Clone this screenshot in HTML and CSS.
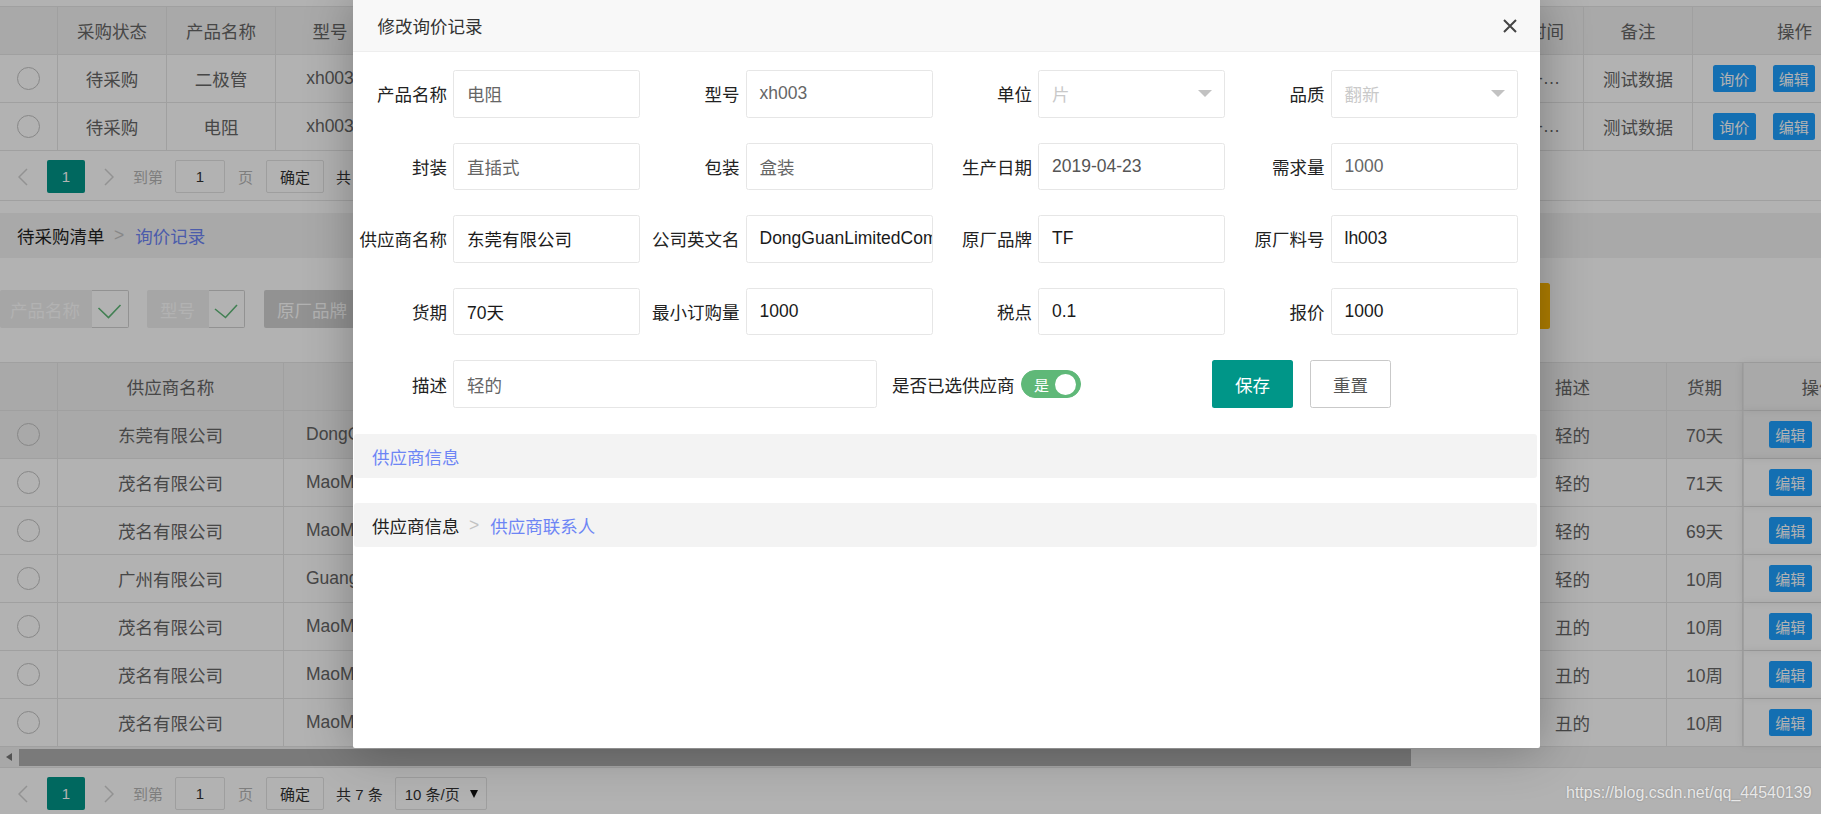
FILE: index.html
```html
<!DOCTYPE html>
<html lang="zh-CN">
<head>
<meta charset="utf-8">
<title>修改询价记录</title>
<link rel="stylesheet" href="styles.css">
</head>
<body>
<div class="page">
  <div class="tview top-t">
    <div class="tr th">
      <div class="td"></div>
      <div class="td">采购状态</div>
      <div class="td">产品名称</div>
      <div class="td">型号</div>
      <div class="td"></div>
      <div class="td"></div>
      <div class="td"></div>
      <div class="td"></div>
      <div class="td"></div>
      <div class="td"></div>
      <div class="td"></div>
      <div class="td"></div>
      <div class="td"></div>
      <div class="td"></div>
      <div class="td">创建时间</div>
      <div class="td">备注</div>
      <div class="td">操作</div>
    </div>
    <div class="tr">
      <div class="td"><span class="radio"></span></div>
      <div class="td">待采购</div>
      <div class="td">二极管</div>
      <div class="td">xh003</div>
      <div class="td"></div>
      <div class="td"></div>
      <div class="td"></div>
      <div class="td"></div>
      <div class="td"></div>
      <div class="td"></div>
      <div class="td"></div>
      <div class="td"></div>
      <div class="td"></div>
      <div class="td"></div>
      <div class="td ell">2019-04-23 10:12:45</div>
      <div class="td">测试数据</div>
      <div class="td ops"><span class="btn-xs">询价</span><span class="btn-xs">编辑</span></div>
    </div>
    <div class="tr">
      <div class="td"><span class="radio"></span></div>
      <div class="td">待采购</div>
      <div class="td">电阻</div>
      <div class="td">xh003</div>
      <div class="td"></div>
      <div class="td"></div>
      <div class="td"></div>
      <div class="td"></div>
      <div class="td"></div>
      <div class="td"></div>
      <div class="td"></div>
      <div class="td"></div>
      <div class="td"></div>
      <div class="td"></div>
      <div class="td ell">2019-04-23 10:15:02</div>
      <div class="td">测试数据</div>
      <div class="td ops"><span class="btn-xs">询价</span><span class="btn-xs">编辑</span></div>
    </div>
    <div class="pager">
      <span class="pg-arr"><svg width="10" height="18" viewBox="0 0 10 18"><polyline points="9,1 1,9 9,17" fill="none" stroke="#d2d2d2" stroke-width="1.5"/></svg></span>
      <span class="pg-cur">1</span>
      <span class="pg-arr pg-next"><svg width="10" height="18" viewBox="0 0 10 18"><polyline points="1,1 9,9 1,17" fill="none" stroke="#d2d2d2" stroke-width="1.5"/></svg></span>
      <span class="pg-txt pg-goto">到第</span>
      <span class="pg-inp">1</span>
      <span class="pg-txt pg-page">页</span>
      <span class="pg-btn">确定</span>
      <span class="pg-count">共 2 条</span>
    </div>
  </div>

  <div class="crumb-band">
    <span class="crumb-a">待采购清单</span><span class="sep">&gt;</span><span class="crumb-cur">询价记录</span>
  </div>

  <div class="filters">
    <div class="chk"><span>产品名称</span><i><svg width="36" height="36" viewBox="0 0 36 36"><polyline points="6.5,17 16.5,26.5 28.5,14" fill="none" stroke="#5fb878" stroke-width="1.6"/></svg></i></div>
    <div class="chk chk2"><span>型号</span><i><svg width="35" height="36" viewBox="0 0 35 36"><polyline points="6,18 16.5,26.5 28,14" fill="none" stroke="#5fb878" stroke-width="1.6"/></svg></i></div>
    <div class="chk chk3 off"><span>原厂品牌</span><i></i></div>
    <div class="btn-warm"></div>
  </div>

  <div class="tview low-t">
    <div class="tr th">
      <div class="td"></div>
      <div class="td">供应商名称</div>
      <div class="td">公司英文名</div>
      <div class="td"></div>
      <div class="td"></div>
      <div class="td"></div>
      <div class="td"></div>
      <div class="td"></div>
      <div class="td"></div>
      <div class="td"></div>
      <div class="td"></div>
      <div class="td l desc">描述</div>
      <div class="td">货期</div>
      <div class="td fixed">操作</div>
    </div>
    <div class="tr hover">
      <div class="td"><span class="radio"></span></div>
      <div class="td">东莞有限公司</div>
      <div class="td l en">DongGuanLimitedCompany</div>
      <div class="td"></div><div class="td"></div><div class="td"></div><div class="td"></div>
      <div class="td"></div><div class="td"></div><div class="td"></div><div class="td"></div>
      <div class="td l desc">轻的</div>
      <div class="td">70天</div>
      <div class="td fixed fops"><span class="btn-xs">编辑</span></div>
    </div>
    <div class="tr">
      <div class="td"><span class="radio"></span></div>
      <div class="td">茂名有限公司</div>
      <div class="td l en">MaoMingLimitedCompany</div>
      <div class="td"></div><div class="td"></div><div class="td"></div><div class="td"></div>
      <div class="td"></div><div class="td"></div><div class="td"></div><div class="td"></div>
      <div class="td l desc">轻的</div>
      <div class="td">71天</div>
      <div class="td fixed fops"><span class="btn-xs">编辑</span></div>
    </div>
    <div class="tr">
      <div class="td"><span class="radio"></span></div>
      <div class="td">茂名有限公司</div>
      <div class="td l en">MaoMingLimitedCompany</div>
      <div class="td"></div><div class="td"></div><div class="td"></div><div class="td"></div>
      <div class="td"></div><div class="td"></div><div class="td"></div><div class="td"></div>
      <div class="td l desc">轻的</div>
      <div class="td">69天</div>
      <div class="td fixed fops"><span class="btn-xs">编辑</span></div>
    </div>
    <div class="tr">
      <div class="td"><span class="radio"></span></div>
      <div class="td">广州有限公司</div>
      <div class="td l en">GuangZhouLimitedCompany</div>
      <div class="td"></div><div class="td"></div><div class="td"></div><div class="td"></div>
      <div class="td"></div><div class="td"></div><div class="td"></div><div class="td"></div>
      <div class="td l desc">轻的</div>
      <div class="td">10周</div>
      <div class="td fixed fops"><span class="btn-xs">编辑</span></div>
    </div>
    <div class="tr">
      <div class="td"><span class="radio"></span></div>
      <div class="td">茂名有限公司</div>
      <div class="td l en">MaoMingLimitedCompany</div>
      <div class="td"></div><div class="td"></div><div class="td"></div><div class="td"></div>
      <div class="td"></div><div class="td"></div><div class="td"></div><div class="td"></div>
      <div class="td l desc">丑的</div>
      <div class="td">10周</div>
      <div class="td fixed fops"><span class="btn-xs">编辑</span></div>
    </div>
    <div class="tr">
      <div class="td"><span class="radio"></span></div>
      <div class="td">茂名有限公司</div>
      <div class="td l en">MaoMingLimitedCompany</div>
      <div class="td"></div><div class="td"></div><div class="td"></div><div class="td"></div>
      <div class="td"></div><div class="td"></div><div class="td"></div><div class="td"></div>
      <div class="td l desc">丑的</div>
      <div class="td">10周</div>
      <div class="td fixed fops"><span class="btn-xs">编辑</span></div>
    </div>
    <div class="tr">
      <div class="td"><span class="radio"></span></div>
      <div class="td">茂名有限公司</div>
      <div class="td l en">MaoMingLimitedCompany</div>
      <div class="td"></div><div class="td"></div><div class="td"></div><div class="td"></div>
      <div class="td"></div><div class="td"></div><div class="td"></div><div class="td"></div>
      <div class="td l desc">丑的</div>
      <div class="td">10周</div>
      <div class="td fixed fops"><span class="btn-xs">编辑</span></div>
    </div>
    <div class="hscroll"><span class="sb-btn"></span><span class="sb-thumb"></span></div>
    <div class="pager bottom">
      <span class="pg-arr"><svg width="10" height="18" viewBox="0 0 10 18"><polyline points="9,1 1,9 9,17" fill="none" stroke="#d2d2d2" stroke-width="1.5"/></svg></span>
      <span class="pg-cur">1</span>
      <span class="pg-arr pg-next"><svg width="10" height="18" viewBox="0 0 10 18"><polyline points="1,1 9,9 1,17" fill="none" stroke="#d2d2d2" stroke-width="1.5"/></svg></span>
      <span class="pg-txt pg-goto">到第</span>
      <span class="pg-inp">1</span>
      <span class="pg-txt pg-page">页</span>
      <span class="pg-btn">确定</span>
      <span class="pg-count">共 7 条</span>
      <span class="pg-limit">10 条/页<i class="pg-tri"></i></span>
    </div>
  </div>
</div>

<div class="shade"></div>

<div class="layer">
  <div class="layer-title">
    <span>修改询价记录</span>
    <span class="layer-close"><svg width="16" height="16" viewBox="0 0 16 16"><path d="M2 2 L14 14 M14 2 L2 14" stroke="#444" stroke-width="2" fill="none"/></svg></span>
  </div>
  <div class="layer-body">
    <div class="form-grid">
      <div class="fi"><label>产品名称</label><div class="inp ro">电阻</div></div>
      <div class="fi"><label>型号</label><div class="inp ro">xh003</div></div>
      <div class="fi"><label>单位</label><div class="inp sel"><span>片</span><i class="tri"></i></div></div>
      <div class="fi"><label>品质</label><div class="inp sel"><span>翻新</span><i class="tri"></i></div></div>

      <div class="fi"><label>封装</label><div class="inp ro">直插式</div></div>
      <div class="fi"><label>包装</label><div class="inp ro">盒装</div></div>
      <div class="fi"><label>生产日期</label><div class="inp mid">2019-04-23</div></div>
      <div class="fi"><label>需求量</label><div class="inp ro">1000</div></div>

      <div class="fi"><label>供应商名称</label><div class="inp">东莞有限公司</div></div>
      <div class="fi"><label>公司英文名</label><div class="inp">DongGuanLimitedCompany</div></div>
      <div class="fi"><label>原厂品牌</label><div class="inp">TF</div></div>
      <div class="fi"><label>原厂料号</label><div class="inp">lh003</div></div>

      <div class="fi"><label>货期</label><div class="inp">70天</div></div>
      <div class="fi"><label>最小订购量</label><div class="inp">1000</div></div>
      <div class="fi"><label>税点</label><div class="inp">0.1</div></div>
      <div class="fi"><label>报价</label><div class="inp">1000</div></div>
    </div>

    <div class="row5">
      <label class="lbl">描述</label>
      <div class="inp ro desc-inp">轻的</div>
      <label class="lbl2">是否已选供应商</label>
      <div class="switch"><em>是</em><i></i></div>
      <span class="btn save">保存</span>
      <span class="btn reset">重置</span>
    </div>

    <div class="band"><span class="crumb-cur">供应商信息</span></div>
    <div class="band band2"><span class="crumb-a">供应商信息</span><span class="sep">&gt;</span><span class="crumb-cur">供应商联系人</span></div>
  </div>
</div>

<div class="wm">https://blog.csdn.net/qq_44540139</div>
</body>
</html>
```

FILE: styles.css
```css
* { box-sizing: border-box; margin: 0; padding: 0; }
html, body { width: 1821px; height: 814px; overflow: hidden; }
body {
  position: relative;
  background: #fff;
  font-family: "Liberation Sans", "Noto Sans CJK SC", sans-serif;
  font-size: 17.5px;
  color: #333;
}

/* ---------- background page ---------- */
.page { width: 1900px; padding-top: 6px; }

.tview { border-top: 1px solid #e6e6e6; border-bottom: 1px solid #e6e6e6; }
.low-t { margin-top: 33px; border-bottom: none; }

.tr { display: grid; height: 48px; border-bottom: 1px solid #e6e6e6; }
.tr.th, .tr.hover { background: #f2f2f2; }
.top-t .tr { grid-template-columns: 58px repeat(15, 109px) 204px; }
.low-t .tr { grid-template-columns: 58px 226px 250px repeat(6, 125px) 126px 126px 131px 76px 152px; }

.td {
  display: flex;
  align-items: center;
  justify-content: center;
  border-right: 1px solid #e6e6e6;
  color: #666;
  white-space: nowrap;
  overflow: hidden;
  padding: 0 18px;
}
.td.l { justify-content: flex-start; }
.td.en { padding-left: 22px; }
.td.desc { padding-left: 19px; }
.td.ell {
  display: block;
  line-height: 47px;
  text-overflow: ellipsis;
  text-align: left;
  padding: 0 17px 0 23px;
}
.td.ops { justify-content: flex-start; gap: 17px; padding-left: 20px; }
.td.fixed {
  border-left: 1px solid #e6e6e6;
  box-shadow: -1px 0 8px rgba(0, 0, 0, 0.08);
}
.td.fops { justify-content: flex-start; gap: 12px; padding-left: 25px; }

.radio {
  width: 23px;
  height: 23px;
  border: 1.5px solid #c2c2c2;
  border-radius: 50%;
  flex: none;
}

.btn-xs {
  display: inline-flex;
  align-items: center;
  height: 27.5px;
  padding: 0 6.25px;
  background: #1e9fff;
  color: #fff;
  font-size: 15px;
  border-radius: 2.5px;
  flex: none;
}

/* pager */
.pager {
  display: flex;
  align-items: flex-start;
  height: 49px;
  padding: 9px 0 0 18px;
  font-size: 15px;
  color: #333;
}
.pager.bottom { height: 47px; border-top: 1px solid #e6e6e6; }
.pager > span { height: 33px; display: flex; align-items: center; justify-content: center; flex: none; }
.pg-arr { width: 10px; }
.pg-cur { margin-left: 19px; width: 38px; background: #009688; color: #fff; border-radius: 2px; }
.pg-next { margin-left: 19px; }
.pg-txt { color: #b5b5b5; }
.pg-goto { margin-left: 19px; }
.pg-inp { margin-left: 12px; width: 50px; border: 1px solid #e2e2e2; border-radius: 2px; }
.pg-page { margin-left: 13px; }
.pg-btn { margin-left: 13px; width: 58px; border: 1px solid #e2e2e2; border-radius: 2px; }
.pg-count { margin-left: 12px; }
.pager > .pg-limit {
  margin-left: 12px;
  width: 92px;
  border: 1px solid #e2e2e2;
  border-radius: 2px;
  justify-content: space-between;
  padding: 0 8px 0 9px;
}
.pg-tri {
  width: 0; height: 0;
  border-style: solid;
  border-width: 8px 4px 0 4px;
  border-color: #111 transparent transparent transparent;
}

/* breadcrumb band */
.crumb-band {
  margin-top: 12px;
  height: 45px;
  background: #f2f2f2;
  display: flex;
  align-items: center;
  padding-left: 17px;
}
.crumb-a { color: #222; }
.sep { margin: 0 11px 0 9.5px; color: #c2c2c2; }
.crumb-cur { color: #6d85f5; }

/* filters */
.filters {
  display: flex;
  align-items: flex-start;
  margin-top: 25px;
  height: 46px;
  width: 1821px;
}
.chk { display: flex; height: 38px; margin-top: 7px; }
.chk span {
  display: flex;
  align-items: center;
  padding: 0 12px 0 10px;
  background: #eeeeee;
  color: #fff;
  border-radius: 2px 0 0 2px;
}
.chk i {
  display: flex;
  width: 37px;
  background: #fff;
  border: 1px solid #d2d2d2;
  border-left: none;
  border-radius: 0 2px 2px 0;
}
.chk2 { margin-left: 18px; }
.chk2 span { padding: 0 14px 0 13px; }
.chk2 i { width: 36px; }
.chk3 { margin-left: 19px; }
.chk3 span { padding: 0 13px; background: #d2d2d2; }
.btn-warm {
  margin-left: auto;
  margin-right: 271px;
  width: 100px;
  height: 46px;
  background: #ffb800;
  border-radius: 2.5px;
}

/* horizontal scrollbar */
.hscroll { display: flex; height: 20px; background: #f1f1f1; width: 1821px; }
.sb-btn { width: 17px; display: flex; align-items: center; justify-content: center; }
.sb-btn::before {
  content: "";
  border-style: solid;
  border-width: 4.5px 6px 4.5px 0;
  border-color: transparent #777 transparent transparent;
}
.sb-thumb { margin: 2px 0 1px 2px; width: 1392px; background: #afafaf; }

/* ---------- shade & layer ---------- */
.shade { position: absolute; inset: 0; background: rgba(0, 0, 0, 0.3); }

.layer {
  position: absolute;
  left: 353px;
  top: 0;
  width: 1187px;
  height: 748px;
  background: #fff;
  border-radius: 2px;
  box-shadow: 1px 1px 50px rgba(0, 0, 0, 0.3);
}
.layer-title {
  display: flex;
  align-items: center;
  height: 52px;
  padding-left: 24.5px;
  background: #f8f8f8;
  border-bottom: 1px solid #eee;
  color: #333;
}
.layer-close { margin-left: auto; margin-right: 22px; display: flex; }

.layer-body { padding-top: 18px; }

.form-grid {
  display: grid;
  grid-template-columns: repeat(4, 285px);
  column-gap: 7.5px;
  row-gap: 25px;
  padding-left: 2px;
}
.fi {
  display: grid;
  grid-template-columns: 92px 187px;
  column-gap: 6px;
  align-items: center;
}
.fi label, .lbl { text-align: right; color: #222; white-space: nowrap; }

.inp {
  height: 47.5px;
  border: 1px solid #e6e6e6;
  border-radius: 2.5px;
  padding-left: 13px;
  display: flex;
  align-items: center;
  white-space: nowrap;
  overflow: hidden;
  color: #1a1a1a;
}
.inp.ro { color: #666; }
.inp.mid { color: #555; }
.inp.sel { justify-content: space-between; padding-right: 12px; color: #c9c9c9; }
.tri {
  width: 0; height: 0;
  border-style: solid;
  border-width: 7.5px 7.5px 0 7.5px;
  border-color: #c2c2c2 transparent transparent transparent;
}

.row5 {
  display: flex;
  align-items: center;
  margin-top: 25px;
  padding-left: 2px;
}
.lbl { width: 92px; }
.desc-inp { margin-left: 6px; width: 424px; }
.lbl2 { margin-left: 15px; color: #222; white-space: nowrap; }
.switch {
  display: flex;
  align-items: center;
  justify-content: space-between;
  margin-left: 6.5px;
  width: 60px;
  height: 28px;
  padding: 0 4px 0 12px;
  background: #5fb878;
  border: 1px solid #5fb878;
  border-radius: 20px;
}
.switch em { font-style: normal; color: #fff; font-size: 15px; }
.switch i { width: 21px; height: 21px; border-radius: 50%; background: #fff; }
.btn {
  display: flex;
  align-items: center;
  justify-content: center;
  width: 81px;
  height: 48px;
  border-radius: 2.5px;
}
.btn.save { margin-left: 131px; background: #009688; color: #fff; }
.btn.reset { margin-left: 17px; background: #fff; border: 1px solid #c9c9c9; color: #555; }

.band {
  display: flex;
  align-items: center;
  height: 44px;
  margin: 26px 3px 0 1px;
  padding-left: 18px;
  background: #f3f3f3;
  border-radius: 3px;
}
.band2 { margin-top: 25px; }

/* watermark */
.wm {
  position: absolute;
  left: 1566px;
  top: 784px;
  font-family: "Liberation Sans", sans-serif;
  font-size: 16px;
  color: rgba(255, 255, 255, 0.78);
  text-shadow: 0 0 2px rgba(0, 0, 0, 0.25);
  white-space: nowrap;
}
```
